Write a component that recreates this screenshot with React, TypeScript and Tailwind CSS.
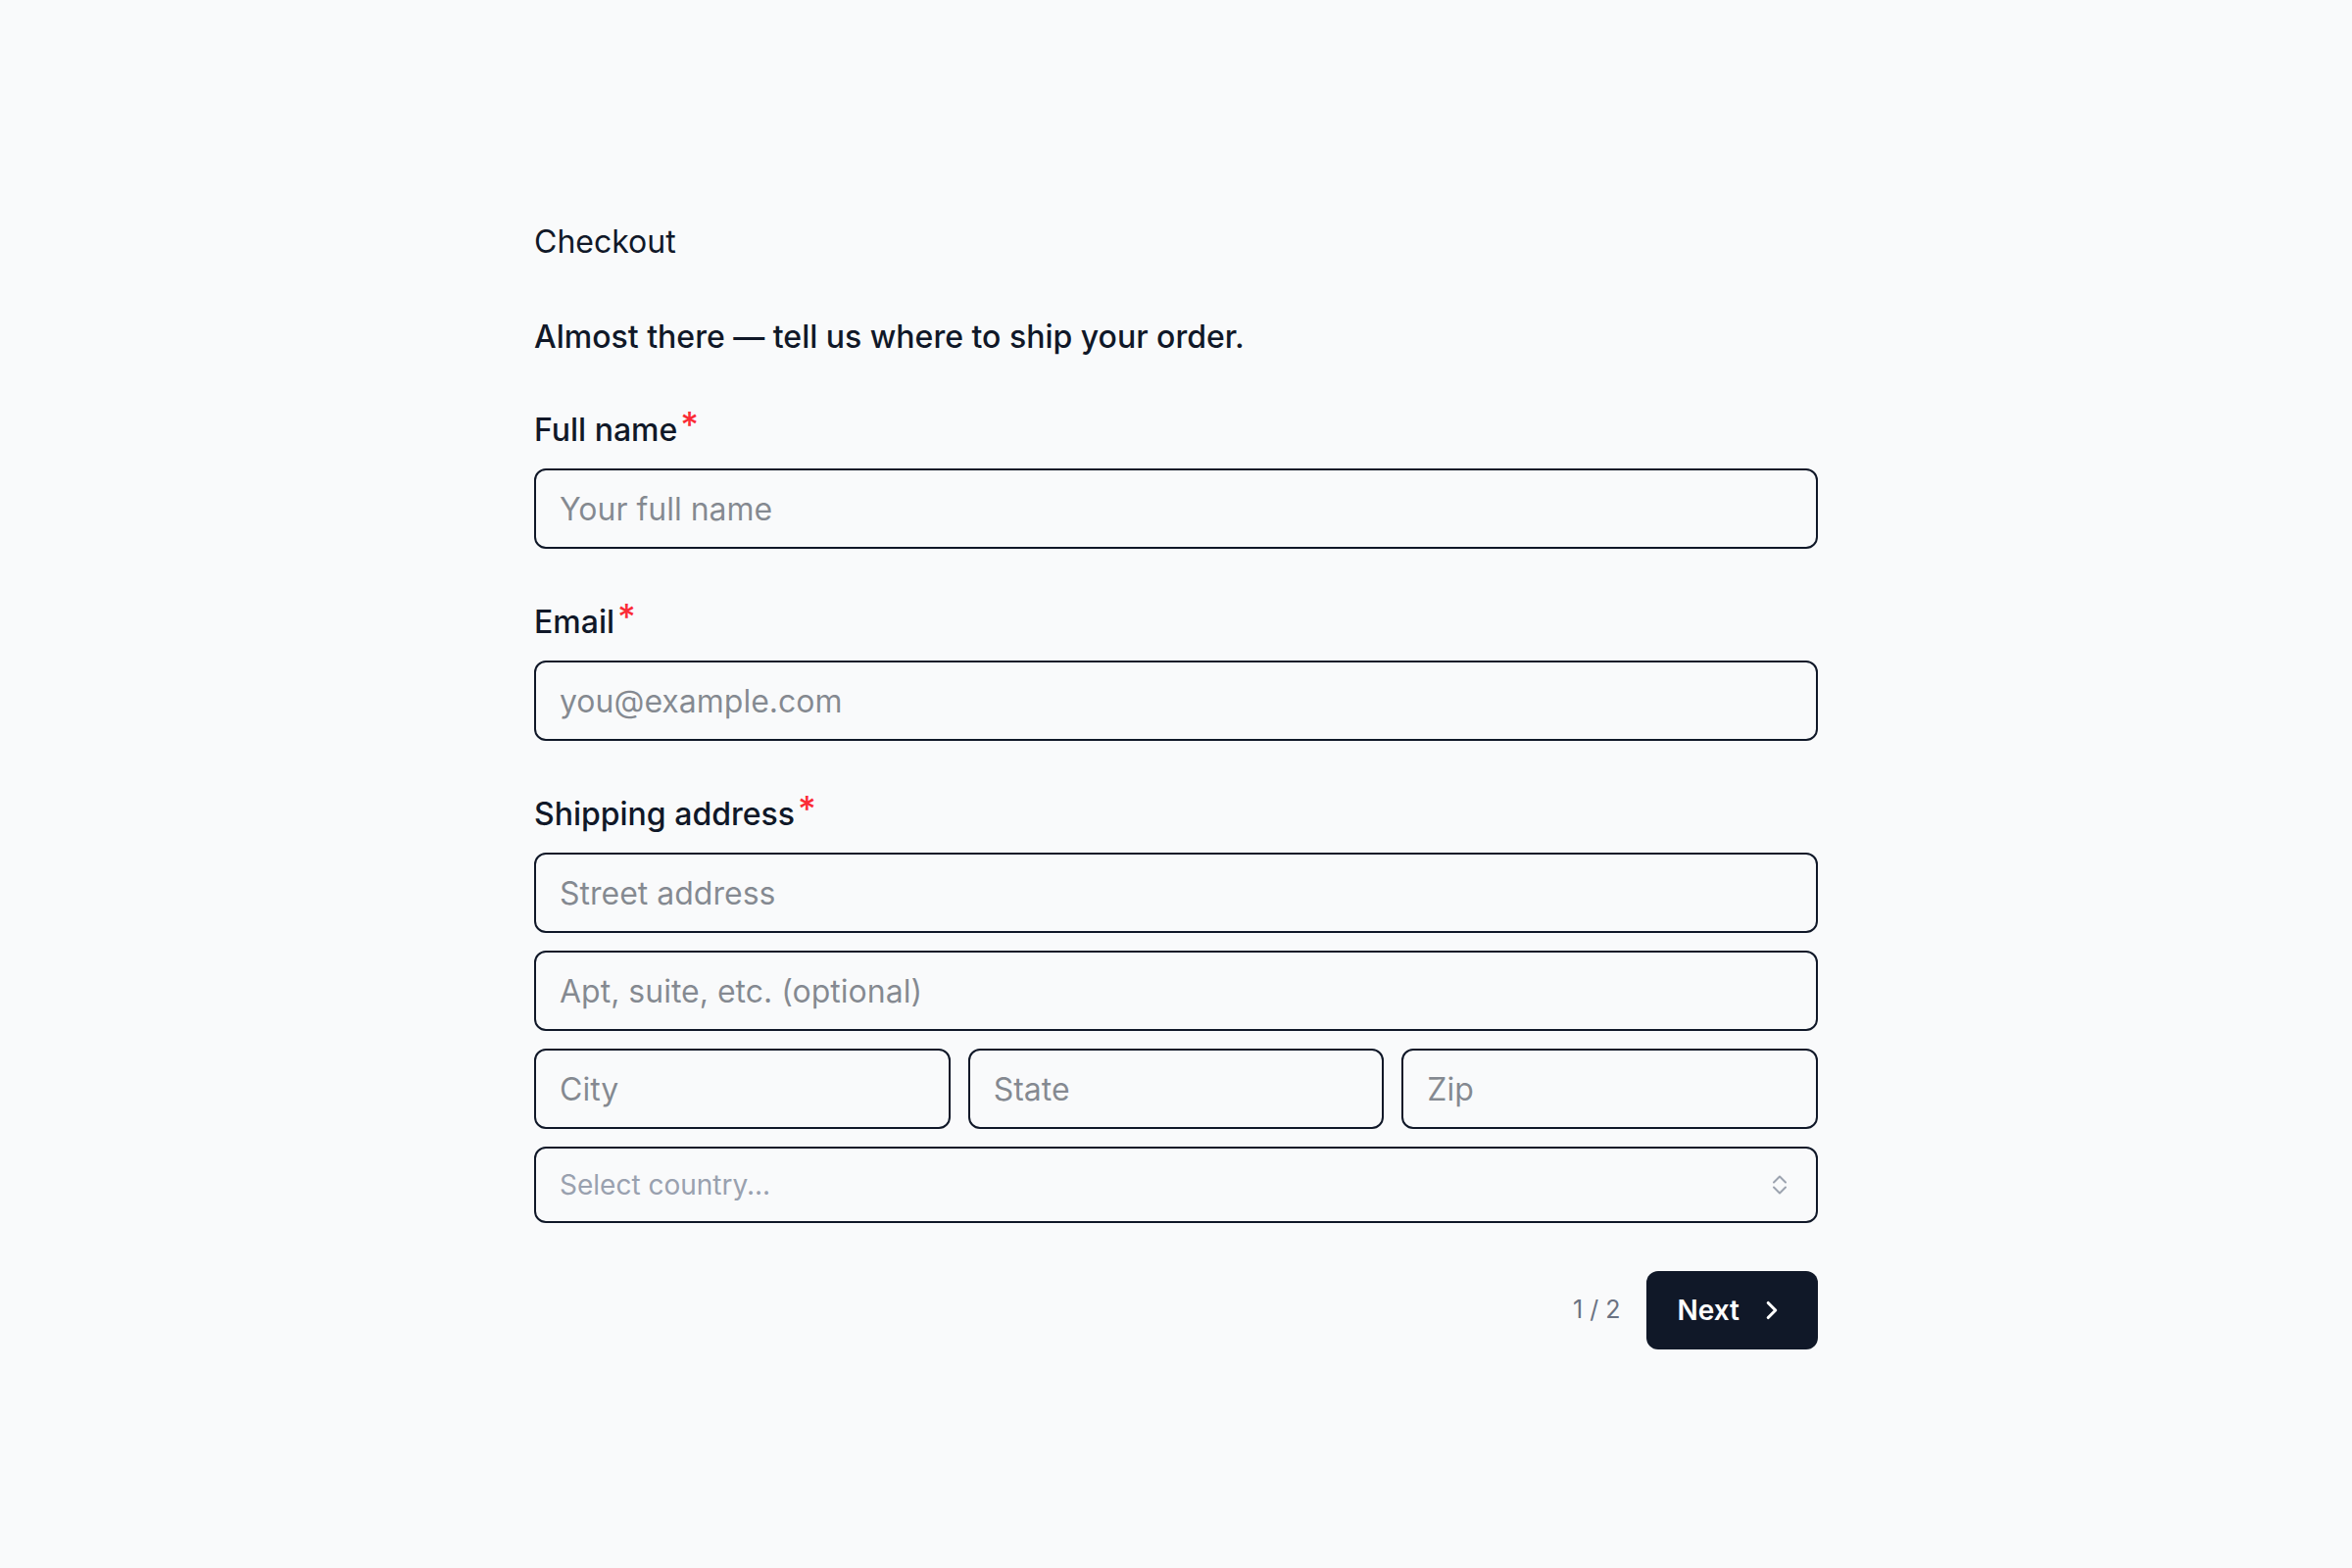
import React from 'react'
import { ChevronRight } from 'lucide-react'

function RequiredLabel({ htmlFor, children }: { htmlFor: string; children: React.ReactNode }) {
  return (
    <label htmlFor={htmlFor} className="mb-[17px] flex h-[45px] items-start text-[32px] font-medium leading-[45px] text-gray-900">
      {children}
      <span className="relative -top-[5px] ml-[3px] text-[36px] text-red-500">*</span>
    </label>
  )
}

function TextInput({ id, placeholder }: { id?: string; placeholder: string }) {
  return (
    <input
      id={id}
      type="text"
      placeholder={placeholder}
      className="block h-[82px] w-full rounded-xl border-2 border-gray-900 bg-transparent px-6 text-[32px] text-gray-900 outline-none"
    />
  )
}

function CountrySelect() {
  return (
    <div className="relative">
      <select
        defaultValue=""
        className="block h-[78px] w-full appearance-none rounded-xl border-2 border-gray-900 bg-transparent pl-6 pr-16 text-[28px] text-gray-400 outline-none"
      >
        <option value="" disabled>
          Select country...
        </option>
        <option value="us">United States</option>
        <option value="ca">Canada</option>
        <option value="gb">United Kingdom</option>
      </select>
      {/* up/down chevrons */}
      <svg
        className="pointer-events-none absolute right-[31px] top-1/2 -translate-y-1/2"
        width="16"
        height="22"
        viewBox="0 0 16 22"
        fill="none"
        stroke="#9ca3af"
        strokeWidth="2"
        strokeLinecap="round"
        strokeLinejoin="round"
      >
        <path d="M2 8.5 8 2.5l6 6" />
        <path d="M2 13.5l6 6 6-6" />
      </svg>
    </div>
  )
}

export default function App() {
  return (
    <div className="min-h-screen bg-[#f9fafb] font-['Inter',sans-serif] text-gray-900">
      <form className="mx-auto w-[1310px] pt-[224px]" onSubmit={e => e.preventDefault()}>
        <h1 className="mb-[52px] text-[32px] font-normal leading-[45px]">Checkout</h1>
        <p className="mb-[50px] text-[32px] font-medium leading-[45px]">
          Almost there — tell us where to ship your order.
        </p>

        <div className="flex flex-col gap-[52px]">
          <div>
            <RequiredLabel htmlFor="name">Full name</RequiredLabel>
            <TextInput id="name" placeholder="Your full name" />
          </div>

          <div>
            <RequiredLabel htmlFor="email">Email</RequiredLabel>
            <TextInput id="email" placeholder="you@example.com" />
          </div>

          <div>
            <RequiredLabel htmlFor="street">Shipping address</RequiredLabel>
            <div className="flex flex-col gap-[18px]">
              <TextInput id="street" placeholder="Street address" />
              <TextInput placeholder="Apt, suite, etc. (optional)" />
              <div className="grid grid-cols-3 gap-[18px]">
                <TextInput placeholder="City" />
                <TextInput placeholder="State" />
                <TextInput placeholder="Zip" />
              </div>
              <CountrySelect />
            </div>
          </div>
        </div>

        <div className="mt-[49px] flex items-center justify-end gap-[26px]">
          <span className="text-[25px] text-gray-500">1 / 2</span>
          <button
            type="submit"
            className="flex h-[80px] items-center gap-[18px] rounded-xl bg-gray-900 px-8 text-[28px] font-semibold text-white"
          >
            Next
            <ChevronRight size={30} strokeWidth={2.5} />
          </button>
        </div>
      </form>
    </div>
  )
}
